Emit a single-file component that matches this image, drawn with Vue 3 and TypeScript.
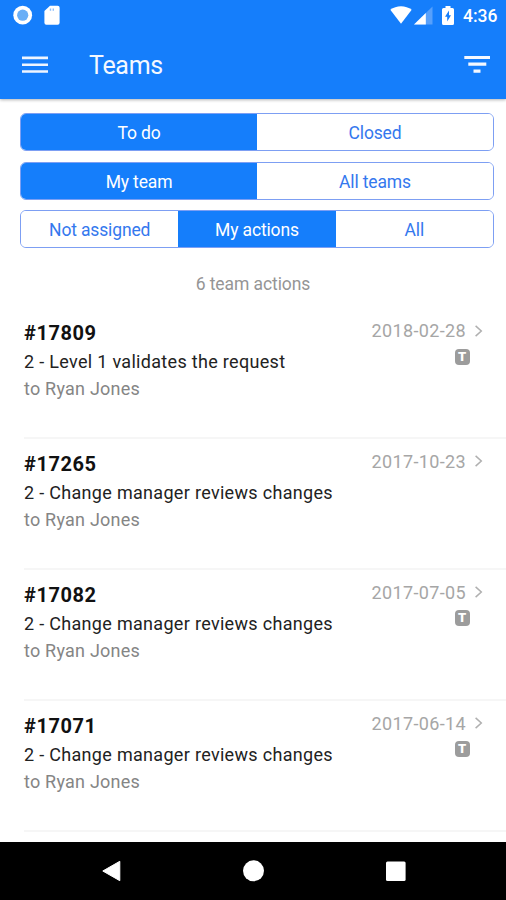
<script setup lang="ts">
import { ref } from 'vue'

interface Segment {
  options: string[]
  selected: number
}

interface TeamAction {
  id: string
  title: string
  assignee: string
  date: string
  tagged: boolean
}

const segments = ref<Segment[]>([
  { options: ['To do', 'Closed'], selected: 0 },
  { options: ['My team', 'All teams'], selected: 0 },
  { options: ['Not assigned', 'My actions', 'All'], selected: 1 },
])

const actions: TeamAction[] = [
  { id: '#17809', title: '2 - Level 1 validates the request', assignee: 'to Ryan Jones', date: '2018-02-28', tagged: true },
  { id: '#17265', title: '2 - Change manager reviews changes', assignee: 'to Ryan Jones', date: '2017-10-23', tagged: false },
  { id: '#17082', title: '2 - Change manager reviews changes', assignee: 'to Ryan Jones', date: '2017-07-05', tagged: true },
  { id: '#17071', title: '2 - Change manager reviews changes', assignee: 'to Ryan Jones', date: '2017-06-14', tagged: true },
]
</script>

<template>
  <div class="screen">
    <header class="top">
      <div class="status">
        <svg class="sync" width="20" height="20" viewBox="0 0 20 20">
          <circle cx="9.700" cy="10.200" r="9.400" fill="#fff" />
          <circle cx="9.700" cy="10.200" r="5.600" fill="#69aef6" />
        </svg>
        <svg class="sd" width="16" height="20" viewBox="0 0 16 20">
          <path d="M6 .8H13.600Q15.600 .8 15.600 2.800V17.700Q15.600 19.700 13.600 19.700H2.400Q.4 19.700 .4 17.700V6Z" fill="#fff" />
          <path d="M6.500 3.400v2.400M9.300 3.400v2.400" stroke="#8fbffa" stroke-width="1.400" />
        </svg>
        <span class="grow"></span>
        <svg width="22" height="20" viewBox="0 0 22 20">
          <path d="M.3 4.800C6.200-.1 15.800-.1 21.700 4.800L11 18.800Z" fill="#fff" />
        </svg>
        <svg class="signal" width="19" height="19" viewBox="0 0 19 19">
          <path d="M18.500 .5V18.500H0Z" fill="#57a0fb" />
          <path d="M11.800 7V18.500H0Z" fill="#fff" />
        </svg>
        <svg class="battery" width="12" height="20" viewBox="0 0 12 20">
          <path d="M3.500 0h5v2h2Q12 2 12 3.500v14Q12 19 10.500 19h-9Q0 19 0 17.500v-14Q0 2 1.500 2h2Z" fill="#fff" />
          <path d="M7 4.500L3 10.800H5.200V15.500L9 9.200H7Z" fill="#157efb" />
        </svg>
        <span class="clock">4:36</span>
      </div>
      <div class="toolbar">
        <svg width="26" height="18" viewBox="0 0 26 18">
          <path d="M0 1.900h26M0 8.700h26M0 15.500h26" stroke="#eef5ff" stroke-width="2.600" />
        </svg>
        <h1>Teams</h1>
        <svg width="26" height="18" viewBox="0 0 26 18">
          <path d="M0.300 1.500h26M4.300 8.200h18M9.500 15.200h7" stroke="#f4f8ff" stroke-width="3.200" />
        </svg>
      </div>
    </header>

    <main>
      <div class="segments">
        <div v-for="(seg, s) in segments" :key="s" class="segment">
          <button
            v-for="(label, i) in seg.options"
            :key="label"
            type="button"
            :class="{ active: seg.selected === i }"
            @click="seg.selected = i"
          >{{ label }}</button>
        </div>
      </div>

      <p class="count">6 team actions</p>

      <ul>
        <li v-for="action in actions" :key="action.id">
          <div class="info">
            <strong>{{ action.id }}</strong>
            <span class="title">{{ action.title }}</span>
            <span class="assignee">{{ action.assignee }}</span>
          </div>
          <div class="meta">
            <div class="date">
              <span>{{ action.date }}</span>
              <svg width="8" height="12" viewBox="0 0 8 12">
                <path d="M.6 .9L6.300 6L.6 11.100" fill="none" stroke="#b0b0b0" stroke-width="1.500" />
              </svg>
            </div>
            <span v-if="action.tagged" class="tag">T</span>
          </div>
        </li>
      </ul>
    </main>

    <nav>
      <svg width="20" height="22" viewBox="0 0 20 22"><path d="M1.800 11L18.800 1.300V20.700Z" fill="#fff" stroke="#fff" stroke-linejoin="round" /></svg>
      <svg width="22" height="22" viewBox="0 0 22 22"><circle cx="10.500" cy="10.800" r="10.500" fill="#fff" /></svg>
      <svg width="20" height="20" viewBox="0 0 20 20"><rect y=".4" width="19.600" height="19.600" rx="1.500" fill="#fff" /></svg>
    </nav>
  </div>
</template>

<style>
body {
  margin: 0;
}
</style>

<style scoped>
.screen {
  box-sizing: border-box;
  width: 506px;
  height: 900px;
  overflow: hidden;
  display: flex;
  flex-direction: column;
  background: #fff;
  font-family: Roboto, 'Liberation Sans', sans-serif;
}

svg {
  display: block;
  flex: none;
}

.top {
  flex: none;
  height: 99px;
  background: #157efb;
  box-shadow: 0 1px 3px rgba(0, 0, 0, 0.3);
  color: #fff;
}

.status {
  display: flex;
  height: 31px;
  box-sizing: border-box;
  padding: 5px 9px 0 13px;
}

.sd {
  margin-left: 11px;
}

.grow {
  flex: 1;
}

.signal {
  margin: 1px 0 0 2px;
}

.battery {
  margin: 1px 9px 0 9px;
}

.clock {
  width: 34px;
  font-size: 17.500px;
  font-weight: 500;
  line-height: 22px;
  white-space: nowrap;
}

.toolbar {
  display: flex;
  align-items: center;
  height: 67px;
  padding: 0 16px 0 22px;
}

h1 {
  flex: 1;
  margin: 2px 0 0 41px;
  font-size: 25px;
  font-weight: 400;
  line-height: 30px;
  letter-spacing: -0.3px;
  color: #f4f8ff;
}

main {
  flex: 1;
  min-height: 0;
  overflow: hidden;
}

.segments {
  display: flex;
  flex-direction: column;
  gap: 11px;
  padding: 14px 12px 0 20px;
}

.segment {
  display: flex;
  box-sizing: border-box;
  height: 38px;
  border: 1px solid #7d9ff3;
  border-radius: 6px;
  overflow: hidden;
}

.segment:last-child {
  margin-top: -1px;
}

button {
  flex: 1 1 0;
  padding: 2px 0 0;
  border: 0;
  background: #fff;
  color: #3478ee;
  font-family: inherit;
  font-size: 17.500px;
  letter-spacing: -0.150px;
  white-space: nowrap;
}

button.active {
  background: #157efb;
  color: #fff;
}

.count {
  margin: 25px 0 0;
  line-height: 23px;
  text-align: center;
  font-size: 17.500px;
  letter-spacing: -0.080px;
  color: #959595;
}

ul {
  margin: 12px 0 0;
  padding: 0 0 0 24px;
  list-style: none;
}

li {
  display: flex;
  justify-content: space-between;
  box-sizing: border-box;
  height: 130.900px;
  padding: 11px 23px 0 0;
  border-bottom: 2px solid #f6f6f6;
}

.info {
  display: flex;
  flex-direction: column;
  white-space: nowrap;
  font-size: 18px;
}

strong {
  line-height: 28px;
  font-size: 20px;
  font-weight: 700;
  letter-spacing: 0.550px;
  color: #111;
}

.title {
  line-height: 29px;
  letter-spacing: 0.310px;
  color: #222;
}

.assignee {
  line-height: 26px;
  letter-spacing: 0.220px;
  color: #858585;
}

.meta {
  display: flex;
  flex-direction: column;
}

.date {
  display: flex;
  align-items: center;
  gap: 9px;
  height: 23px;
  font-size: 18px;
  letter-spacing: 0.350px;
  color: #a6a6a6;
}

.tag {
  width: 15px;
  height: 16px;
  margin: 6.500px 0 0 83px;
  border-radius: 4px;
  background: #9c9c9c;
  color: #fff;
  font-size: 13px;
  font-weight: 900;
  line-height: 16px;
  text-align: center;
}

nav {
  flex: none;
  display: flex;
  align-items: center;
  justify-content: space-between;
  box-sizing: border-box;
  height: 58px;
  padding: 0 100px 0 101px;
  background: #000;
}
</style>
